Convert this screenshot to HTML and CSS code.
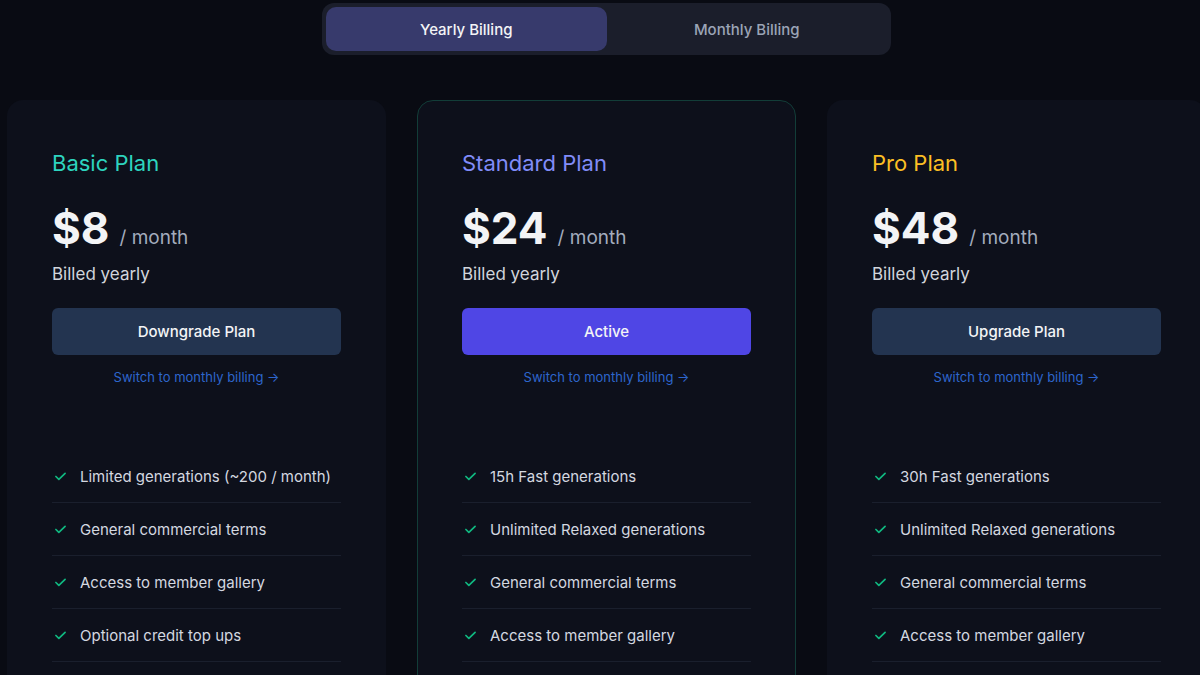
FILE: index.html
```html
<!DOCTYPE html>
<html lang="en">
<head>
    <meta charset="UTF-8">
    <meta name="viewport" content="width=device-width, initial-scale=1.0">
    <title>Pricing</title>
    <link rel="stylesheet" href="styles.css">
</head>
<body>
    <section id="pricing">
        <!-- billing toggle -->
        <div class="billing-toggle">
            <button class="toggle-tab active">Yearly Billing</button>
            <button class="toggle-tab">Monthly Billing</button>
        </div>

        <!-- plans -->
        <div class="plans">
            <div class="plan">
                <h2 class="plan-name basic">Basic Plan</h2>
                <div class="plan-price"><span class="amount">$8</span><span class="per">/ month</span></div>
                <p class="plan-billed">Billed yearly</p>
                <button class="plan-btn">Downgrade Plan</button>
                <a class="plan-switch" href="#">Switch to monthly billing &rarr;</a>
                <ul class="features">
                    <li><svg viewBox="0 0 12 9"><path d="M1 4.5l3.2 3.2L11 1"/></svg>Limited generations (~200 / month)</li>
                    <li><svg viewBox="0 0 12 9"><path d="M1 4.5l3.2 3.2L11 1"/></svg>General commercial terms</li>
                    <li><svg viewBox="0 0 12 9"><path d="M1 4.5l3.2 3.2L11 1"/></svg>Access to member gallery</li>
                    <li><svg viewBox="0 0 12 9"><path d="M1 4.5l3.2 3.2L11 1"/></svg>Optional credit top ups</li>
                </ul>
            </div>

            <div class="plan current">
                <h2 class="plan-name standard">Standard Plan</h2>
                <div class="plan-price"><span class="amount">$24</span><span class="per">/ month</span></div>
                <p class="plan-billed">Billed yearly</p>
                <button class="plan-btn active">Active</button>
                <a class="plan-switch" href="#">Switch to monthly billing &rarr;</a>
                <ul class="features">
                    <li><svg viewBox="0 0 12 9"><path d="M1 4.5l3.2 3.2L11 1"/></svg>15h Fast generations</li>
                    <li><svg viewBox="0 0 12 9"><path d="M1 4.5l3.2 3.2L11 1"/></svg>Unlimited Relaxed generations</li>
                    <li><svg viewBox="0 0 12 9"><path d="M1 4.5l3.2 3.2L11 1"/></svg>General commercial terms</li>
                    <li><svg viewBox="0 0 12 9"><path d="M1 4.5l3.2 3.2L11 1"/></svg>Access to member gallery</li>
                </ul>
            </div>

            <div class="plan">
                <h2 class="plan-name pro">Pro Plan</h2>
                <div class="plan-price"><span class="amount">$48</span><span class="per">/ month</span></div>
                <p class="plan-billed">Billed yearly</p>
                <button class="plan-btn">Upgrade Plan</button>
                <a class="plan-switch" href="#">Switch to monthly billing &rarr;</a>
                <ul class="features">
                    <li><svg viewBox="0 0 12 9"><path d="M1 4.5l3.2 3.2L11 1"/></svg>30h Fast generations</li>
                    <li><svg viewBox="0 0 12 9"><path d="M1 4.5l3.2 3.2L11 1"/></svg>Unlimited Relaxed generations</li>
                    <li><svg viewBox="0 0 12 9"><path d="M1 4.5l3.2 3.2L11 1"/></svg>General commercial terms</li>
                    <li><svg viewBox="0 0 12 9"><path d="M1 4.5l3.2 3.2L11 1"/></svg>Access to member gallery</li>
                </ul>
            </div>
        </div>
    </section>
</body>
</html>
```

FILE: styles.css
```css
html, body {
    margin: 0;
    padding: 0;
    background: #090b13;
    overflow: hidden;
}

#pricing {
    font-family: 'Inter', 'Liberation Sans', sans-serif;
    color: #e5e7eb;
    width: 1199px;
    margin-left: 7px;
    padding-top: 3px;
}

#pricing .billing-toggle {
    display: grid;
    grid-template-columns: 1fr 1fr;
    width: 569px;
    height: 52px;
    box-sizing: border-box;
    margin: 0 auto;
    padding: 4px;
    background: #1b1e2b;
    border-radius: 12px;
}

#pricing .toggle-tab {
    font-family: inherit;
    font-size: 15px;
    font-weight: 500;
    color: #9ba4b6;
    background: none;
    border: none;
    border-radius: 10px;
    cursor: pointer;
}

#pricing .toggle-tab.active {
    background: #373a6c;
    color: #f3f4f6;
}

#pricing .plans {
    display: grid;
    grid-template-columns: repeat(3, 379px);
    gap: 31px;
    margin-top: 45px;
}

#pricing .plan {
    background: #0d101b;
    border: 1px solid transparent;
    border-radius: 16px;
    padding: 48px 44px 0;
    height: 600px;
}

#pricing .plan.current {
    border-color: #123d38;
}

#pricing .plan-name {
    font-size: 22px;
    font-weight: 400;
    margin: 0;
    line-height: 28px;
}

#pricing .plan-name.basic { color: #2dd4bf; }
#pricing .plan-name.standard { color: #818cf8; }
#pricing .plan-name.pro { color: #fbbf24; }

#pricing .plan-price {
    display: flex;
    align-items: baseline;
    gap: 10px;
    margin-top: 25px;
    line-height: 52px;
}

#pricing .plan-price .amount {
    font-size: 44px;
    font-weight: 700;
    color: #f3f4f6;
}

#pricing .plan-price .per {
    font-size: 19px;
    color: #a3acbd;
}

#pricing .plan-billed {
    font-size: 17px;
    color: #d1d5db;
    margin: -2px 0 0;
    line-height: 24px;
}

#pricing .plan-btn {
    display: block;
    width: 100%;
    height: 47px;
    margin-top: 22px;
    font-family: inherit;
    font-size: 15px;
    font-weight: 500;
    color: #f3f4f6;
    background: #233450;
    border: none;
    border-radius: 6px;
    cursor: pointer;
}

#pricing .plan-btn.active {
    background: #4f46e5;
}

#pricing .plan-switch {
    display: block;
    text-align: center;
    font-size: 13px;
    color: #2d66cc;
    text-decoration: none;
    margin-top: 13px;
    line-height: 18px;
}

#pricing .features {
    list-style: none;
    padding: 0;
    margin: 64px 0 0;
}

#pricing .features li {
    display: flex;
    align-items: center;
    gap: 14px;
    height: 52px;
    border-bottom: 1px solid #1a1f2d;
    font-size: 15px;
    color: #d4d8e0;
    padding-left: 3px;
}

#pricing .features svg {
    width: 11px;
    height: 9px;
    fill: none;
    stroke: #10b981;
    stroke-width: 1.8;
    stroke-linecap: round;
    stroke-linejoin: round;
}
```
